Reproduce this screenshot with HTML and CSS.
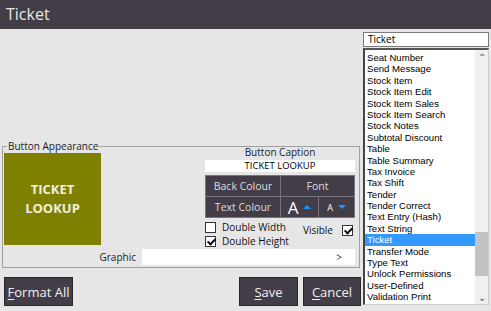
FILE: index.html
```html
<!doctype html>
<html lang="en">
<head>
    <meta charset="UTF-8">
    <title>Ticket</title>
    <link rel="stylesheet" href="styles.css">
</head>
<body>
<div class="window">
    <div class="titlebar">Ticket</div>
    <div class="content">
        <div class="left">
            <fieldset class="appearance">
                <legend>Button Appearance</legend>
                <div class="appearance-top">
                    <div class="preview">TICKET<br>LOOKUP</div>
                    <div class="caption">
                        <div class="caption-label">Button Caption</div>
                        <div class="caption-input">TICKET LOOKUP</div>
                        <div class="colour-grid">
                            <div class="cell">Back Colour</div>
                            <div class="cell">Font</div>
                            <div class="cell">Text Colour</div>
                            <div class="cell font-size">
                                <div class="size-btn"><span class="big-a">A</span><span class="tri up"></span></div>
                                <div class="size-btn"><span class="small-a">A</span><span class="tri down"></span></div>
                            </div>
                        </div>
                        <div class="checks">
                            <div class="check-col">
                                <label class="check"><span class="box"></span>Double Width</label>
                                <label class="check"><span class="box on"></span>Double Height</label>
                            </div>
                            <label class="check visible">Visible<span class="box on"></span></label>
                        </div>
                    </div>
                </div>
                <div class="graphic-row">
                    <span class="graphic-label">Graphic</span>
                    <div class="graphic-input">&gt;</div>
                </div>
            </fieldset>
            <div class="actions">
                <button class="btn format"><u>F</u>ormat All</button>
                <div class="spacer"></div>
                <button class="btn save"><u>S</u>ave</button>
                <button class="btn cancel"><u>C</u>ancel</button>
            </div>
        </div>
        <div class="right">
            <div class="search">Ticket</div>
            <div class="listbox">
                <ul class="items">
                    <li>Seat Number</li>
                    <li>Send Message</li>
                    <li>Stock Item</li>
                    <li>Stock Item Edit</li>
                    <li>Stock Item Sales</li>
                    <li>Stock Item Search</li>
                    <li>Stock Notes</li>
                    <li>Subtotal Discount</li>
                    <li>Table</li>
                    <li>Table Summary</li>
                    <li>Tax Invoice</li>
                    <li>Tax Shift</li>
                    <li>Tender</li>
                    <li>Tender Correct</li>
                    <li>Text Entry (Hash)</li>
                    <li>Text String</li>
                    <li class="selected">Ticket</li>
                    <li>Transfer Mode</li>
                    <li>Type Text</li>
                    <li>Unlock Permissions</li>
                    <li>User-Defined</li>
                    <li>Validation Print</li>
                </ul>
                <div class="scrollbar">
                    <span class="arrow">&#8963;</span>
                    <div class="track"><div class="thumb"></div></div>
                    <span class="arrow">&#8964;</span>
                </div>
            </div>
        </div>
    </div>
</div>
</body>
</html>
```

FILE: styles.css
```css
* {
    margin: 0;
    padding: 0;
    box-sizing: border-box;
    list-style: none;
}
body {
    font-family: "Open Sans", "Noto Sans", sans-serif;
    font-size: 10px;
    color: #000;
    background: #e6e6e6;
}
.window {
    width: 491px;
    height: 311px;
    display: flex;
    flex-direction: column;
    overflow: hidden;
}
.titlebar {
    height: 29px;
    background: #433d47;
    color: #e8e8e8;
    font-size: 16px;
    line-height: 29px;
    padding-left: 6px;
}
.content {
    flex: 1;
    display: flex;
}

/* left side */
.left {
    width: 363px;
    padding: 111px 0 0 2px;
    display: flex;
    flex-direction: column;
}
.appearance {
    width: 358px;
    border: 1px solid #a0a0a0;
    padding: 0 0 2px 1px;
    display: flex;
    flex-direction: column;
}
.appearance legend {
    margin-left: 3px;
    padding: 0 1px;
    color: #1a1a2e;
    line-height: 12px;
}
.appearance-top {
    height: 93px;
    display: flex;
}
.preview {
    width: 97px;
    height: 92px;
    background: #808000;
    color: #f0f0e0;
    font-weight: bold;
    font-size: 13px;
    line-height: 19px;
    display: flex;
    align-items: center;
    justify-content: center;
    text-align: center;
    margin-top: 1px;
}
.caption {
    width: 150px;
    margin-left: 104px;
    display: flex;
    flex-direction: column;
}
.caption-label {
    text-align: center;
    color: #222;
    line-height: 13px;
    margin-top: -6px;
}
.caption-input {
    background: #fff;
    height: 12px;
    line-height: 12px;
    text-align: center;
    font-size: 9.5px;
    margin-top: 1px;
}
.colour-grid {
    margin-top: 3px;
    display: grid;
    grid-template-columns: 74px 1fr;
    grid-template-rows: 20px 20px;
    gap: 1px;
    background: #7a7480;
    border: 1px solid #7a7480;
}
.cell {
    background: #433d47;
    color: #ddd;
    font-size: 10.5px;
    display: flex;
    align-items: center;
    justify-content: center;
}
.font-size {
    background: #7a7480;
    gap: 1px;
    justify-content: stretch;
}
.size-btn {
    flex: 1;
    height: 100%;
    background: #433d47;
    display: flex;
    align-items: center;
    justify-content: center;
    gap: 5px;
    color: #fff;
}
.size-btn:first-child {
    flex: 0 0 37px;
}
.big-a {
    font-size: 17px;
    line-height: 1;
}
.small-a {
    font-size: 9px;
}
.tri {
    width: 0;
    height: 0;
    border-left: 4px solid transparent;
    border-right: 4px solid transparent;
}
.tri.up {
    border-bottom: 4px solid #1e90ff;
}
.tri.down {
    border-top: 4px solid #1e90ff;
}
.checks {
    display: flex;
    justify-content: space-between;
    margin-top: 4px;
}
.check-col {
    display: flex;
    flex-direction: column;
    gap: 3px;
}
.check {
    display: flex;
    align-items: center;
    gap: 6px;
    color: #111;
    line-height: 11px;
}
.visible {
    align-self: flex-start;
    margin-top: 3px;
    margin-right: 2px;
    gap: 9px;
}
.box {
    width: 11px;
    height: 11px;
    background: #fff;
    border: 1px solid #333;
    position: relative;
}
.box.on::after {
    content: "";
    position: absolute;
    left: 3px;
    top: 0px;
    width: 3px;
    height: 6px;
    border: solid #000;
    border-width: 0 2px 2px 0;
    transform: rotate(45deg);
}
.graphic-row {
    display: flex;
    align-items: center;
    margin-top: 4px;
}
.graphic-label {
    width: 138px;
    text-align: right;
    color: #222;
    padding-right: 6px;
}
.graphic-input {
    width: 213px;
    height: 16px;
    background: #fff;
    text-align: right;
    padding-right: 13px;
    line-height: 16px;
    font-size: 10px;
    color: #333;
}
.actions {
    display: flex;
    margin-top: 9px;
    padding-left: 2px;
}
.spacer {
    flex: 1;
}
.btn {
    height: 29px;
    background: #433d47;
    color: #f0f0f0;
    border: 1px solid #2a262c;
    font-family: "Open Sans", "Noto Sans", sans-serif;
    font-size: 13px;
    padding: 0;
}
.btn u {
    text-underline-offset: 2px;
}
.format {
    width: 69px;
}
.save {
    width: 59px;
}
.cancel {
    width: 58px;
    margin-left: 5px;
    margin-right: 2px;
}

/* right side */
.right {
    width: 128px;
    padding-top: 3px;
    display: flex;
    flex-direction: column;
}
.search {
    width: 126px;
    height: 15px;
    background: #fff;
    border: 1px solid #7a7a7a;
    line-height: 13px;
    padding-left: 4px;
}
.listbox {
    width: 126px;
    height: 257px;
    margin-top: 1px;
    background: #fff;
    border-style: solid;
    border-width: 2px 1px 1px 2px;
    border-color: #555 #ccc #ccc #444;
    display: flex;
}
.items {
    flex: 1;
    padding-top: 2px;
}
.items li {
    height: 11.4px;
    line-height: 11.4px;
    padding-left: 2px;
    font-family: "Liberation Sans", Arial, sans-serif;
    font-size: 9.6px;
    color: #000;
    white-space: nowrap;
}
.items li.selected {
    background: #3399ff;
    color: #fff;
}
.scrollbar {
    width: 13px;
    background: #f0f0f0;
    display: flex;
    flex-direction: column;
    align-items: center;
    color: #555;
}
.arrow {
    height: 14px;
    font-size: 10px;
    line-height: 14px;
}
.track {
    flex: 1;
    width: 100%;
    display: flex;
    flex-direction: column;
    justify-content: flex-end;
    padding-bottom: 14px;
}
.thumb {
    height: 44px;
    background: #c2c2c2;
}
```
